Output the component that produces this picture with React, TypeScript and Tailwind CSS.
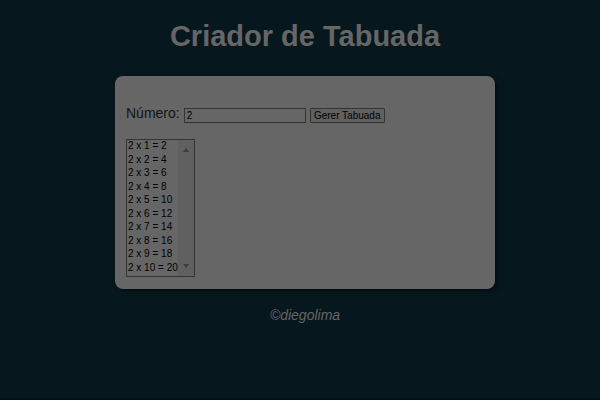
import { useState } from "react";

const multipliers = [1, 2, 3, 4, 5, 6, 7, 8, 9, 10];

export default function App() {
  const [value, setValue] = useState("2");
  const [base, setBase] = useState(2);

  return (
    <div className="flex min-h-screen flex-col items-center border-b-2 border-[#050f18] bg-[#07171e] pl-[10px] font-['Liberation_Sans',Arial,sans-serif] text-black">
      <header className="pt-4">
        <h1 className="text-[29px] leading-10 font-bold text-[#666666]">Criador de Tabuada</h1>
      </header>
      <main className="mt-5 w-full max-w-[380px] rounded-lg bg-[#666666] px-[11px] pt-[27px] pb-3 shadow-[2px_2px_4px_rgba(0,0,0,0.5)]">
        <form
          className="flex items-end gap-1"
          onSubmit={(e) => {
            e.preventDefault();
            setBase(Number(value));
          }}
        >
          <label htmlFor="numero" className="text-sm leading-5 text-[#141414]">Número:</label>
          <input
            id="numero"
            type="text"
            inputMode="numeric"
            value={value}
            onChange={(e) => setValue(e.target.value)}
            className="h-[15px] w-[122px] border border-[#343434] bg-[#666666] px-0.5 text-[10px] leading-3 outline-none"
          />
          <button type="submit" className="h-[15px] w-[75px] rounded-[1px] border border-[#343434] bg-[#606060] text-[10px] leading-3 whitespace-nowrap">
            Gerer Tabuada
          </button>
        </form>
        <div className="mt-4 flex h-[138px] w-[69px] border border-[#343434]">
          <select
            size={10}
            aria-label="Tabuada"
            className="h-full w-[51px] appearance-none overflow-hidden bg-transparent text-[10px] leading-[13px] outline-none"
          >
            {multipliers.map((n) => (
              <option key={n} className="min-h-0 p-0 pl-px odd:h-[14px] even:h-[13px]">
                {`${base} x ${n} = ${base * n}`}
              </option>
            ))}
          </select>
          <div aria-hidden="true" className="flex flex-1 flex-col items-center justify-between bg-[#606060] py-2">
            <svg className="h-1 w-1.5" viewBox="0 0 6 4" fill="#3c3c3c"><path d="M0 4 3 0l3 4z" /></svg>
            <svg className="h-1 w-1.5" viewBox="0 0 6 4" fill="#3c3c3c"><path d="m0 0 3 4 3-4z" /></svg>
          </div>
        </div>
      </main>
      <footer className="mt-4 text-sm leading-5 text-[#666666] italic">©diegolima</footer>
    </div>
  );
}
